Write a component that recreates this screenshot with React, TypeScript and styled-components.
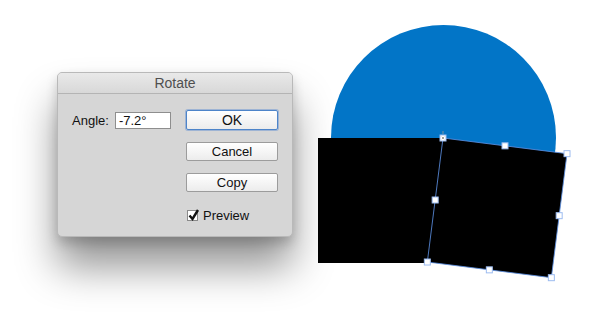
import React from 'react';
import styled, { createGlobalStyle } from 'styled-components';

const GlobalStyle = createGlobalStyle`
    html, body {
        margin: 0;
        padding: 0;
        background: #ffffff;
    }
    body {
        width: 600px;
        height: 325px;
        overflow: hidden;
        font-family: 'Liberation Sans', Arial, sans-serif;
    }
`;

const Page = styled.div`
    display: flex;
    flex-direction: row;
    align-items: flex-start;
    padding: 20px 0 0 57px;
`;

const Dialog = styled.div`
    width: 236px;
    height: 165px;
    margin-top: 52px;
    box-sizing: border-box;
    background: #d6d6d6;
    border: 1px solid #b9b9b9;
    border-radius: 5px;
    box-shadow: 0 30px 40px rgba(0, 0, 0, 0.42), 0 6px 12px rgba(0, 0, 0, 0.18);
    display: flex;
    flex-direction: column;
    overflow: hidden;
`;

const TitleBar = styled.div`
    height: 21px;
    box-sizing: border-box;
    background: linear-gradient(#e9e9e9, #d8d8d8);
    border-bottom: 1px solid #b4b4b4;
    display: flex;
    align-items: center;
    justify-content: center;
    font-size: 14px;
    color: #4f4f4f;
`;

const Body = styled.div`
    display: flex;
    flex-direction: row;
    justify-content: space-between;
    padding: 16px 14px 0 14px;
`;

const AngleRow = styled.div`
    display: flex;
    flex-direction: row;
    align-items: center;
    gap: 6px;
    height: 20px;
    font-size: 13px;
    color: #111;
`;

const AngleInput = styled.div`
    width: 56px;
    height: 17px;
    box-sizing: border-box;
    background: #ffffff;
    border: 1px solid #8e8e8e;
    padding-left: 3px;
    display: flex;
    align-items: center;
    font-size: 13px;
    color: #111;
`;

const ButtonColumn = styled.div`
    display: flex;
    flex-direction: column;
    gap: 12px;
    width: 92px;
`;

const Button = styled.div<{ $focused?: boolean }>`
    height: ${p => (p.$focused ? 20 : 19)}px;
    box-sizing: border-box;
    border: 1px solid ${p => (p.$focused ? '#4d84c9' : '#9c9c9c')};
    box-shadow: ${p => (p.$focused ? '0 0 0 1px rgba(90, 140, 210, 0.45)' : 'none')};
    border-radius: 2px;
    background: linear-gradient(#ffffff, #ececec);
    display: flex;
    align-items: center;
    justify-content: center;
    font-size: ${p => (p.$focused ? 14 : 13)}px;
    color: #111;
`;

const CheckRow = styled.div`
    display: flex;
    flex-direction: row;
    align-items: center;
    gap: 5px;
    margin-top: 4px;
    padding-left: 1px;
    font-size: 13px;
    color: #111;
`;

const CheckBox = styled.div`
    width: 11px;
    height: 11px;
    box-sizing: border-box;
    border: 1px solid #8a8a8a;
    background: #ffffff;
    position: relative;
`;

const CheckMark = styled.svg`
    position: absolute;
    left: -1px;
    top: -3px;
`;

const Artwork = styled.svg`
    margin-left: 17px;
    display: block;
`;

const pivot = { x: 443, y: 138 };
const side = 125;
const angle = (7.2 * Math.PI) / 180;

const rotatePoint = (u: number, v: number) => ({
    x: pivot.x + u * Math.cos(angle) - v * Math.sin(angle),
    y: pivot.y + u * Math.sin(angle) + v * Math.cos(angle),
});

const handles = [
    [side / 2, 0],
    [side, 0],
    [side, side / 2],
    [side, side],
    [side / 2, side],
    [0, side],
    [0, side / 2],
].map(([u, v]) => rotatePoint(u, v));

const App = () => {
    return (
        <React.Fragment>
            <GlobalStyle />
            <Page>
                <Dialog>
                    <TitleBar>Rotate</TitleBar>
                    <Body>
                        <AngleRow>
                            Angle:
                            <AngleInput>-7.2°</AngleInput>
                        </AngleRow>
                        <ButtonColumn>
                            <Button $focused>OK</Button>
                            <Button>Cancel</Button>
                            <Button>Copy</Button>
                            <CheckRow>
                                <CheckBox>
                                    <CheckMark width="13" height="14" viewBox="0 0 13 14">
                                        <path
                                            d="M2.5 7.5 L5.5 11 L11 2"
                                            fill="none"
                                            stroke="#111"
                                            strokeWidth="2.4"
                                        />
                                    </CheckMark>
                                </CheckBox>
                                Preview
                            </CheckRow>
                        </ButtonColumn>
                    </Body>
                </Dialog>
                <Artwork width="270" height="265" viewBox="310 20 270 265">
                    <circle cx="443.5" cy="137.5" r="112.5" fill="#0275c7" />
                    <rect x="318" y="138" width="125" height="125" fill="#000" />
                    <g transform={`rotate(7.2 ${pivot.x} ${pivot.y})`}>
                        <rect
                            x={pivot.x}
                            y={pivot.y}
                            width={side}
                            height={side}
                            fill="#000"
                            stroke="#5b8ee0"
                            strokeWidth="0.8"
                        />
                    </g>
                    <line x1="443" y1="131" x2="443" y2="134" stroke="#999" strokeWidth="0.8" />
                    {handles.map((h, i) => (
                        <rect
                            key={i}
                            x={h.x - 3}
                            y={h.y - 3}
                            width="6"
                            height="6"
                            fill="#fff"
                            stroke="#9dbcf0"
                            strokeWidth="1"
                        />
                    ))}
                    <rect x="440" y="135" width="6" height="6" fill="#fff" stroke="#9dbcf0" strokeWidth="1" />
                    <path d="M441.8 136.8 L444.2 139.2 M444.2 136.8 L441.8 139.2" stroke="#888" strokeWidth="0.8" />
                </Artwork>
            </Page>
        </React.Fragment>
    );
};

export default App;
